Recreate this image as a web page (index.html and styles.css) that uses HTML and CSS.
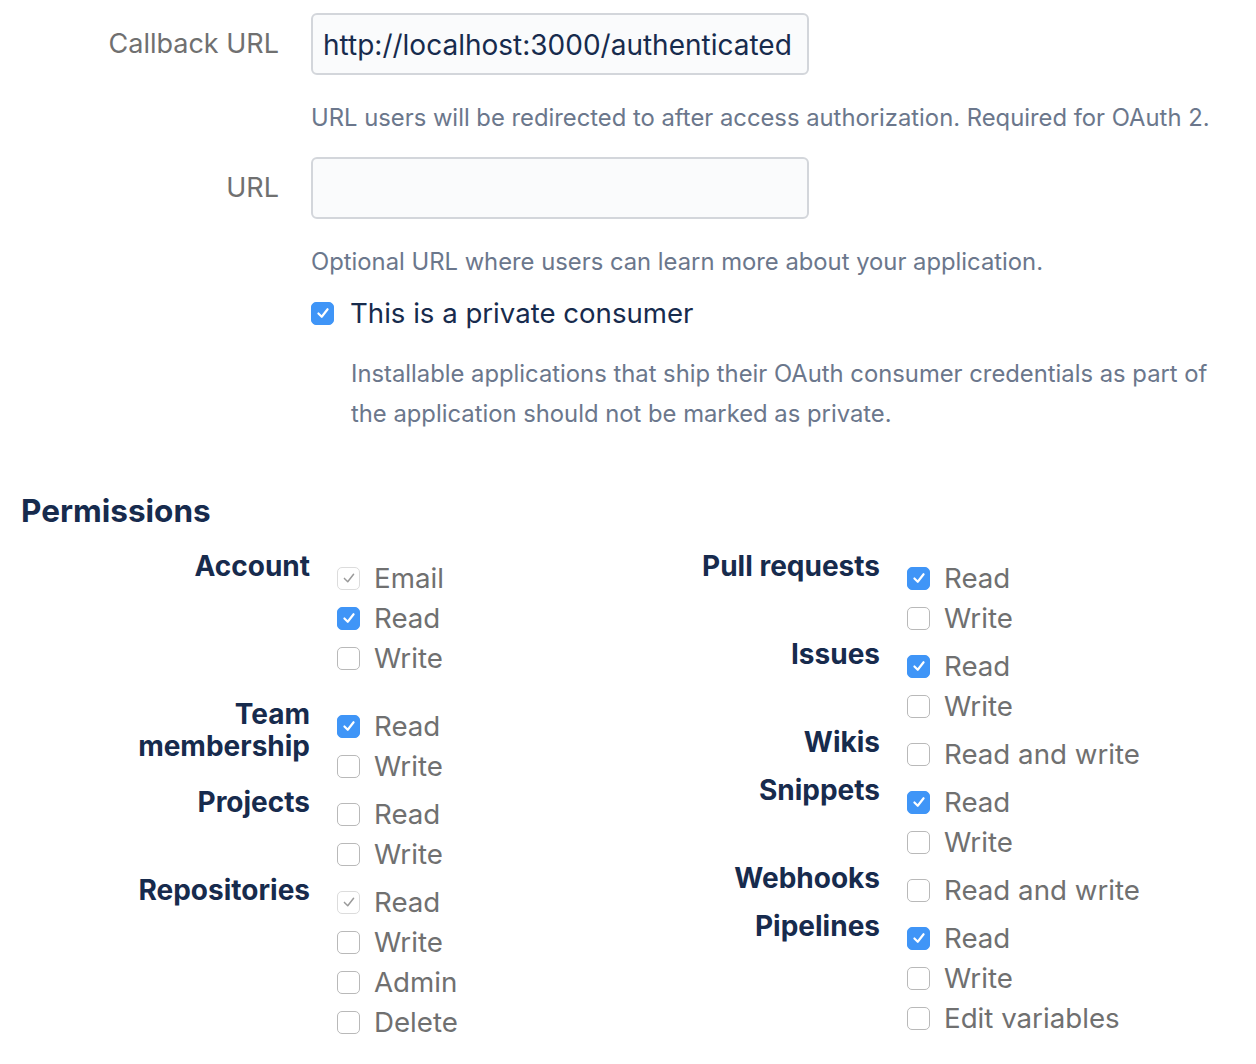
FILE: index.html
```html
<!DOCTYPE html>
<html lang="en">
<head>
<meta charset="utf-8">
<title>OAuth consumer</title>
<link rel="stylesheet" href="styles.css">
</head>
<body>
<div class="page">
  <div class="field">
    <label class="field-label">Callback URL</label>
    <div class="input">http://localhost:3000/authenticated</div>
    <p class="help">URL users will be redirected to after access authorization. Required for OAuth 2.</p>
  </div>
  <div class="field field-second">
    <label class="field-label">URL</label>
    <div class="input"></div>
    <p class="help">Optional URL where users can learn more about your application.</p>
  </div>
  <div class="private">
    <div class="private-row">
      <span class="cb checked"><svg viewBox="0 0 24 24"><path d="M6.5 12.5 L10.5 16.5 L17.5 7.5"/></svg></span>
      <span class="private-text">This is a private consumer</span>
    </div>
    <p class="desc">Installable applications that ship their OAuth consumer credentials as part of the application should not be marked as private.</p>
  </div>

  <h2 class="perm-title">Permissions</h2>
  <div class="perms">
    <div class="perm-col">
      <div class="group">
        <div class="group-label">Account</div>
        <ul class="opts">
          <li><span class="cb disabled"><svg viewBox="0 0 24 24"><path d="M6.5 12.5 L10.5 16.5 L17.5 7.5"/></svg></span>Email</li>
          <li><span class="cb checked"><svg viewBox="0 0 24 24"><path d="M6.5 12.5 L10.5 16.5 L17.5 7.5"/></svg></span>Read</li>
          <li><span class="cb"></span>Write</li>
        </ul>
      </div>
      <div class="group group-team">
        <div class="group-label">Team<br>membership</div>
        <ul class="opts">
          <li><span class="cb checked"><svg viewBox="0 0 24 24"><path d="M6.5 12.5 L10.5 16.5 L17.5 7.5"/></svg></span>Read</li>
          <li><span class="cb"></span>Write</li>
        </ul>
      </div>
      <div class="group">
        <div class="group-label">Projects</div>
        <ul class="opts">
          <li><span class="cb"></span>Read</li>
          <li><span class="cb"></span>Write</li>
        </ul>
      </div>
      <div class="group">
        <div class="group-label">Repositories</div>
        <ul class="opts">
          <li><span class="cb disabled"><svg viewBox="0 0 24 24"><path d="M6.5 12.5 L10.5 16.5 L17.5 7.5"/></svg></span>Read</li>
          <li><span class="cb"></span>Write</li>
          <li><span class="cb"></span>Admin</li>
          <li><span class="cb"></span>Delete</li>
        </ul>
      </div>
    </div>
    <div class="perm-col">
      <div class="group">
        <div class="group-label">Pull requests</div>
        <ul class="opts">
          <li><span class="cb checked"><svg viewBox="0 0 24 24"><path d="M6.5 12.5 L10.5 16.5 L17.5 7.5"/></svg></span>Read</li>
          <li><span class="cb"></span>Write</li>
        </ul>
      </div>
      <div class="group">
        <div class="group-label">Issues</div>
        <ul class="opts">
          <li><span class="cb checked"><svg viewBox="0 0 24 24"><path d="M6.5 12.5 L10.5 16.5 L17.5 7.5"/></svg></span>Read</li>
          <li><span class="cb"></span>Write</li>
        </ul>
      </div>
      <div class="group">
        <div class="group-label">Wikis</div>
        <ul class="opts">
          <li><span class="cb"></span>Read and write</li>
        </ul>
      </div>
      <div class="group">
        <div class="group-label">Snippets</div>
        <ul class="opts">
          <li><span class="cb checked"><svg viewBox="0 0 24 24"><path d="M6.5 12.5 L10.5 16.5 L17.5 7.5"/></svg></span>Read</li>
          <li><span class="cb"></span>Write</li>
        </ul>
      </div>
      <div class="group">
        <div class="group-label">Webhooks</div>
        <ul class="opts">
          <li><span class="cb"></span>Read and write</li>
        </ul>
      </div>
      <div class="group">
        <div class="group-label">Pipelines</div>
        <ul class="opts">
          <li><span class="cb checked"><svg viewBox="0 0 24 24"><path d="M6.5 12.5 L10.5 16.5 L17.5 7.5"/></svg></span>Read</li>
          <li><span class="cb"></span>Write</li>
          <li><span class="cb"></span>Edit variables</li>
        </ul>
      </div>
    </div>
  </div>
</div>
</body>
</html>
```
FILE: styles.css
```css
* { box-sizing: border-box; }
html, body { margin: 0; padding: 0; background: #fff; }
body {
  font-family: Inter, "Noto Sans", "Liberation Sans", sans-serif;
  color: #172b4d;
}
.page { width: 1256px; padding-top: 13px; }

.field {
  display: grid;
  grid-template-columns: 279px 498px;
  column-gap: 32px;
  align-items: center;
}
.field-second { margin-top: 19px; }
.field-label {
  text-align: right;
  font-size: 27px;
  color: #707070;
  line-height: 40px;
}
.input {
  height: 62px;
  border: 2px solid #d3d6db;
  border-radius: 6px;
  background: #fafbfc;
  font-size: 28px;
  line-height: 60px;
  padding: 0 10px;
  color: #172b4d;
  white-space: nowrap;
  overflow: hidden;
}
.help {
  grid-column: 2;
  width: 940px;
  margin: 23px 0 0 0;
  font-size: 23.8px;
  line-height: 40px;
  color: #6b778c;
  white-space: nowrap;
}

.private { margin-left: 311px; margin-top: 11px; }
.private-row {
  display: flex;
  align-items: center;
  height: 40px;
  gap: 16px;
}
.private-text { font-size: 27.6px; color: #172b4d; }
.desc {
  margin: 21px 0 0 40px;
  width: 870px;
  font-size: 23.8px;
  line-height: 40px;
  color: #6b778c;
}

.perm-title {
  margin: 57px 0 0 21px;
  font-size: 31.5px;
  line-height: 40px;
  font-weight: 700;
  color: #172b4d;
}
.perms {
  display: grid;
  grid-template-columns: 570px 570px;
  margin-top: 19px;
  margin-left: 21px;
}
.group {
  display: flex;
  align-items: flex-start;
  gap: 27px;
}
.group-team { margin-top: 20px; }
.group-label {
  width: 289px;
  text-align: right;
  font-size: 28px;
  font-weight: 700;
  line-height: 32px;
  color: #172b4d;
  flex: none;
}
.opts {
  list-style: none;
  margin: 8px 0 0 0;
  padding: 0;
}
.opts li {
  display: flex;
  align-items: center;
  gap: 14px;
  height: 40px;
  font-size: 27.7px;
  color: #707070;
  white-space: nowrap;
}

.cb {
  width: 23px;
  height: 23px;
  border: 1.5px solid #b9b9b9;
  border-radius: 5px;
  background: #fff;
  flex: none;
  display: inline-flex;
  align-items: center;
  justify-content: center;
}
.cb svg { width: 20px; height: 20px; }
.cb svg path { fill: none; stroke-width: 2.6; stroke-linecap: round; stroke-linejoin: round; }
.cb.checked { background: #3f95f7; border-color: #3f95f7; }
.cb.checked svg path { stroke: #fff; }
.cb.disabled { border-color: #dcdcdc; }
.cb.disabled svg path { stroke: #9a9a9a; stroke-width: 1.8; }
```
